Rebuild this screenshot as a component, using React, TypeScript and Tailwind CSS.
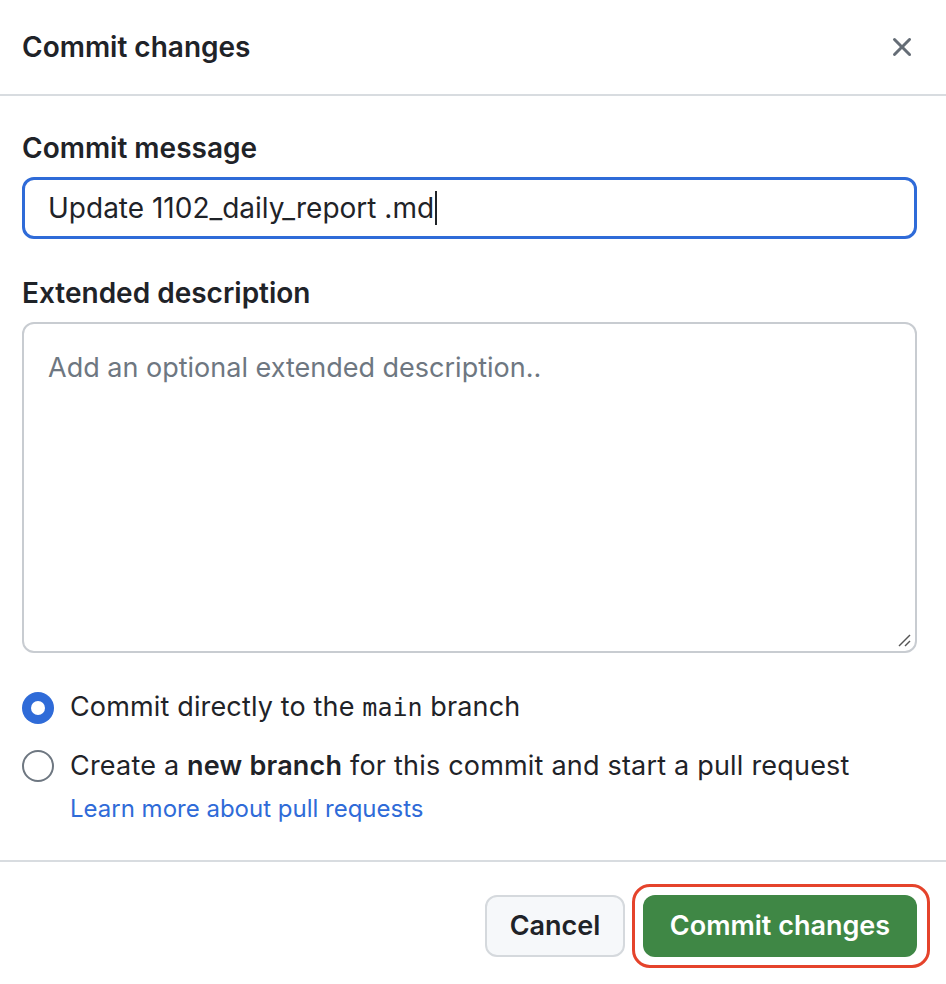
import React from 'react';

const CloseIcon = () => (
  <svg width="32" height="32" viewBox="0 0 16 16" fill="#656d76">
    <path d="M3.72 3.72a.75.75 0 0 1 1.06 0L8 6.94l3.22-3.22a.749.749 0 0 1 1.275.326.749.749 0 0 1-.215.734L9.06 8l3.22 3.22a.749.749 0 0 1-.326 1.275.749.749 0 0 1-.734-.215L8 9.06l-3.22 3.22a.751.751 0 0 1-1.042-.018.751.751 0 0 1-.018-1.042L6.94 8 3.72 4.78a.75.75 0 0 1 0-1.06Z" />
  </svg>
);

const App = () => {
  return (
    <div className="flex h-[984px] w-[946px] flex-col overflow-hidden bg-white font-['Inter',sans-serif] text-[#1f2328]">
      <div className="flex h-[94px] items-center justify-between pl-[22px] pr-[28px]">
        <h1 className="text-[28px] font-semibold leading-[36px]">Commit changes</h1>
        <CloseIcon />
      </div>
      <div className="h-[2px] bg-[#d8dce0]" />

      <div className="flex flex-col pl-[22px] pr-[29px] pt-[36px]">
        <label className="text-[28px] font-semibold leading-[32px]">Commit message</label>
        <div className="mt-[13px] flex h-[62px] items-center rounded-[12px] border-[3px] border-[#2f6bd8] pl-[23px]">
          <span className="text-[28px] leading-none">Update 1102_daily_report .md</span>
          <span className="ml-[1px] h-[34px] w-[2px] bg-[#1f2328]" />
        </div>

        <label className="mt-[38px] text-[28px] font-semibold leading-[32px]">Extended description</label>
        <div className="relative mt-[13px] h-[331px] rounded-[12px] border-2 border-[#c8ccd1] pl-[24px] pt-[28px]">
          <span className="text-[27px] leading-[32px] text-[#6e7781]">Add an optional extended description..</span>
          <svg className="absolute bottom-[3px] right-[3px]" width="16" height="16" viewBox="0 0 16 16" stroke="#555" strokeWidth="1.5">
            <line x1="3" y1="14" x2="14" y2="3" />
            <line x1="9" y1="14" x2="14" y2="9" />
          </svg>
        </div>

        <div className="mt-[38px] flex items-center gap-[16px]">
          <span className="flex h-[32px] w-[32px] items-center justify-center rounded-full bg-[#2f6bd8]">
            <span className="h-[14px] w-[14px] rounded-full bg-white" />
          </span>
          <span className="text-[27px] leading-[32px] tracking-[0.15px]">
            Commit directly to the <code className="font-['DejaVu_Sans_Mono',monospace] text-[25px] tracking-normal">main</code> branch
          </span>
        </div>
        <div className="mt-[26px] flex items-center gap-[16px]">
          <span className="h-[32px] w-[32px] rounded-full border-2 border-[#6e7781]" />
          <span className="text-[27px] leading-[32px] tracking-[0.2px]">
            Create a <b className="font-semibold">new branch</b> for this commit and start a pull request
          </span>
        </div>
        <a className="ml-[48px] mt-[12px] text-[24px] leading-[30px] text-[#2f6bd8]">Learn more about pull requests</a>
      </div>

      <div className="mt-[36px] h-[2px] bg-[#d8dce0]" />

      <div className="flex justify-end gap-[7px] pr-[16px] pt-[22px]">
        <button className="mt-[11px] h-[62px] w-[140px] rounded-[12px] border-2 border-[#d5d9dd] bg-[#f6f8fa] text-[27px] font-semibold">
          Cancel
        </button>
        <div className="rounded-[18px] border-[3px] border-[#e5432b] py-[8px] pl-[8px] pr-[10px]">
          <button className="h-[62px] w-[274px] rounded-[12px] bg-[#3f8745] text-[27px] font-semibold text-white">
            Commit changes
          </button>
        </div>
      </div>
    </div>
  );
};

export default App;
